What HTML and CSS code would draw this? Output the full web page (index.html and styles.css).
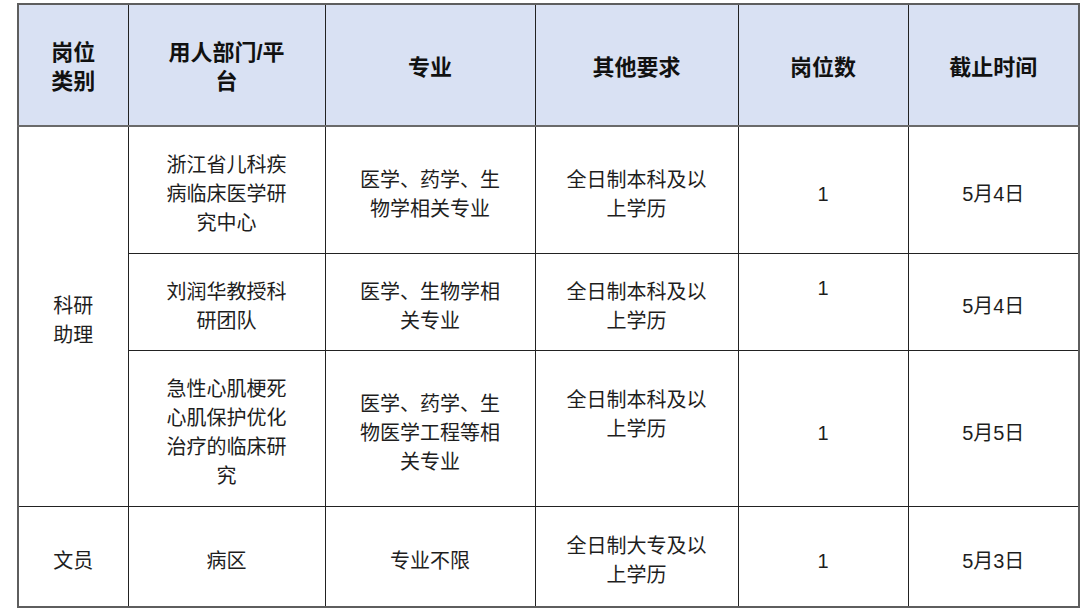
FILE: index.html
```html
<!DOCTYPE html>
<html lang="zh-CN">
<head>
<meta charset="utf-8">
<title>岗位表</title>
<link rel="stylesheet" href="styles.css">
</head>
<body>
<table class="jobs">
  <colgroup>
    <col class="c1"><col class="c2"><col class="c3"><col class="c4"><col class="c5"><col class="c6">
  </colgroup>
  <thead>
    <tr class="r-head">
      <th>岗位<br>类别</th>
      <th>用人部门/平<br>台</th>
      <th>专业</th>
      <th>其他要求</th>
      <th>岗位数</th>
      <th>截止时间</th>
    </tr>
  </thead>
  <tbody>
    <tr class="r1">
      <td rowspan="3">科研<br>助理</td>
      <td>浙江省儿科疾<br>病临床医学研<br>究中心</td>
      <td>医学、药学、生<br>物学相关专业</td>
      <td>全日制本科及以<br>上学历</td>
      <td>1</td>
      <td>5月4日</td>
    </tr>
    <tr class="r2">
      <td>刘润华教授科<br>研团队</td>
      <td>医学、生物学相<br>关专业</td>
      <td>全日制本科及以<br>上学历</td>
      <td class="lift">1</td>
      <td>5月4日</td>
    </tr>
    <tr class="r3">
      <td>急性心肌梗死<br>心肌保护优化<br>治疗的临床研<br>究</td>
      <td>医学、药学、生<br>物医学工程等相<br>关专业</td>
      <td class="lift">全日制本科及以<br>上学历</td>
      <td>1</td>
      <td>5月5日</td>
    </tr>
    <tr class="r4">
      <td>文员</td>
      <td>病区</td>
      <td>专业不限</td>
      <td>全日制大专及以<br>上学历</td>
      <td>1</td>
      <td>5月3日</td>
    </tr>
  </tbody>
</table>
</body>
</html>
```
FILE: styles.css
```css
html, body {
  margin: 0;
  padding: 0;
  background: #ffffff;
}

body {
  padding: 3px 0 0 17px;
  font-family: "Liberation Sans", "Noto Sans CJK SC", sans-serif;
  color: #1e1e1e;
}

.jobs {
  border-collapse: collapse;
  table-layout: fixed;
  width: 1061px;
  border: 2px solid #5e5e5e;
}

.c1 { width: 110px; }
.c2 { width: 197px; }
.c3 { width: 210px; }
.c4 { width: 203px; }
.c5 { width: 170px; }
.c6 { width: 171px; }

.jobs th,
.jobs td {
  border: 1px solid #222222;
  text-align: center;
  vertical-align: middle;
  padding: 4px 0 0 0;
  line-height: 29px;
}

.jobs th {
  background: #d9e1f3;
  font-weight: 700;
  font-size: 22px;
  color: #111111;
  border-bottom: 2px solid #6a6a6a;
}

.jobs td {
  font-size: 20px;
  font-weight: 400;
  padding-top: 10px;
}

.r-head { height: 122px; }
.r1 { height: 127px; }
.r2 { height: 97px; }
.r3 { height: 156px; }
.r4 { height: 101px; }

.jobs td.lift {
  padding-bottom: 36px;
}
```
